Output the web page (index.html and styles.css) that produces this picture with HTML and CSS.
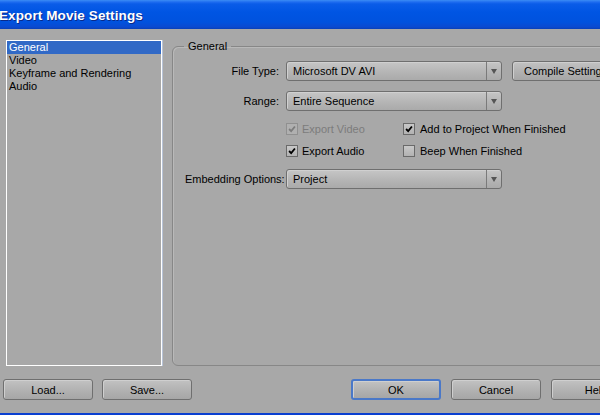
FILE: index.html
```html
<!DOCTYPE html>
<html>
<head>
<meta charset="utf-8">
<link rel="stylesheet" href="styles.css">
</head>
<body>
<div class="window">
  <div class="titlebar"><span class="title">Export Movie Settings</span></div>
  <div class="content">
    <div class="list">
      <div class="item selected">General</div>
      <div class="item">Video</div>
      <div class="item">Keyframe and Rendering</div>
      <div class="item">Audio</div>
    </div>
    <fieldset class="group">
      <legend>General</legend>
      <div class="form">
        <div class="label">File Type:</div>
        <div class="select"><span class="val">Microsoft DV AVI</span><span class="arrow"></span></div>
        <div class="btn compile">Compile Settings...</div>

        <div class="label">Range:</div>
        <div class="select"><span class="val">Entire Sequence</span><span class="arrow"></span></div>
        <div></div>

        <div></div>
        <div class="checks">
          <label class="check disabled"><span class="box"><svg viewBox="0 0 12 12"><path d="M2.5 6 L5 8.5 L9.5 3" /></svg></span>Export Video</label>
          <label class="check col2"><span class="box"><svg viewBox="0 0 12 12"><path d="M2.5 6 L5 8.5 L9.5 3" /></svg></span>Add to Project When Finished</label>
          <label class="check"><span class="box"><svg viewBox="0 0 12 12"><path d="M2.5 6 L5 8.5 L9.5 3" /></svg></span>Export Audio</label>
          <label class="check col2"><span class="box"></span>Beep When Finished</label>
        </div>
        <div></div>

        <div class="label">Embedding Options:</div>
        <div class="select"><span class="val">Project</span><span class="arrow"></span></div>
        <div></div>
      </div>
    </fieldset>
  </div>
  <div class="buttons">
    <div class="btn">Load...</div>
    <div class="btn">Save...</div>
    <div class="spacer"></div>
    <div class="btn focus">OK</div>
    <div class="btn wide">Cancel</div>
    <div class="btn wide">Help</div>
  </div>
</div>
</body>
</html>
```
FILE: styles.css
```css
html, body {
  margin: 0;
  padding: 0;
  width: 600px;
  height: 415px;
  overflow: hidden;
  background: #a8a8a8;
}
.window {
  width: 600px;
  height: 415px;
  display: flex;
  flex-direction: column;
  background: #a8a8a8;
  font-family: "Liberation Sans", Arial, sans-serif;
  font-size: 11px;
  color: #000;
  border-bottom: 2px solid #0a3fd0;
  box-sizing: border-box;
  overflow: hidden;
}
.titlebar {
  height: 29px;
  flex: none;
  background: linear-gradient(#3b8cf5 0px, #1f6df0 2px, #0a5ce8 4px, #0055e3 12px, #0052de 22px, #0a4ad0 27px, #0840b8 29px);
  display: flex;
  align-items: center;
}
.title {
  color: #fff;
  font-weight: bold;
  font-size: 13.5px;
  margin-left: -1px;
  margin-top: 2px;
  text-shadow: 1px 1px 0 #0a2a8a;
  letter-spacing: 0.1px;
}
.content {
  display: flex;
  padding: 11px 0 0 6px;
  gap: 10px;
  height: 337px;
  box-sizing: border-box;
  flex: none;
}
.list {
  width: 156px;
  height: 326px;
  box-sizing: border-box;
  border: 1px solid #fff;
  box-shadow: 1px 0 0 #b8c4d8;
  flex: none;
}
.item {
  height: 13px;
  line-height: 13px;
  padding-left: 2px;
  white-space: nowrap;
}
.item.selected {
  background: #3169c6;
  color: #fff;
}
.group {
  margin: 1px 0 0 0;
  padding: 0 0 0 12px;
  width: 460px;
  height: 325px;
  box-sizing: border-box;
  flex: none;
  border: 1px solid #878787;
  box-shadow: inset 1px 1px 0 #b9b9b9;
  border-radius: 6px;
  min-width: 0;
}
.group legend {
  padding: 0 4px;
  margin-left: -1px;
  font-size: 11px;
  line-height: 11px;
}
.form {
  display: grid;
  grid-template-columns: 94px 216px auto;
  column-gap: 7px;
  row-gap: 10px;
  align-items: center;
  margin-top: 8px;
}
.label {
  text-align: right;
  white-space: nowrap;
}
.select {
  height: 20px;
  box-sizing: border-box;
  border: 1px solid #6f6f6f;
  border-radius: 3px;
  background: linear-gradient(#c6c6c6, #b4b4b4 60%, #aaaaaa);
  display: flex;
  align-items: center;
  box-shadow: inset 1px 1px 0 #d0d0d0;
}
.select .val {
  flex: 1;
  padding-left: 6px;
}
.select .arrow {
  width: 14px;
  height: 18px;
  border-left: 1px solid #7a7a7a;
  position: relative;
}
.select .arrow::after {
  content: "";
  position: absolute;
  left: 4px;
  top: 7px;
  border-left: 3px solid transparent;
  border-right: 3px solid transparent;
  border-top: 5px solid #555;
}
.btn {
  height: 21px;
  width: 90px;
  box-sizing: border-box;
  border: 1px solid #6f6f6f;
  border-radius: 3px;
  background: linear-gradient(#c2c2c2, #b0b0b0 60%, #a6a6a6);
  box-shadow: inset 1px 1px 0 #cfcfcf;
  display: flex;
  align-items: center;
  justify-content: center;
  white-space: nowrap;
  flex: none;
}
.btn.compile {
  width: auto;
  padding: 0 11px;
  justify-content: flex-start;
  margin-left: 3px;
  margin-top: 1px;
  height: 20px;
}
.btn.focus {
  border: 2px solid #4a78c8;
}
.checks {
  display: grid;
  grid-template-columns: 117px auto;
  row-gap: 10px;
  margin-top: 2px;
  margin-bottom: 2px;
}
.check {
  display: flex;
  align-items: center;
  height: 12px;
  white-space: nowrap;
}
.check .box {
  width: 12px;
  height: 12px;
  box-sizing: border-box;
  border: 1px solid #6a6a6a;
  background: linear-gradient(#c8c8c8, #b2b2b2);
  margin-right: 4px;
  display: flex;
  flex: none;
}
.check .box svg {
  width: 10px;
  height: 10px;
  fill: none;
  stroke: #000;
  stroke-width: 2.2;
}
.check.col2 .box {
  margin-right: 5px;
}
.check.disabled {
  color: #7c7c7c;
}
.check.disabled .box {
  border-color: #909090;
  background: #b0b0b0;
}
.check.disabled svg {
  stroke: #7c7c7c;
}
.buttons {
  display: flex;
  padding: 0 0 0 3px;
  gap: 9px;
  margin-top: 13px;
}
.buttons .spacer {
  width: 141px;
  flex: none;
}
.buttons .wide {
  margin-left: 1px;
}
```
